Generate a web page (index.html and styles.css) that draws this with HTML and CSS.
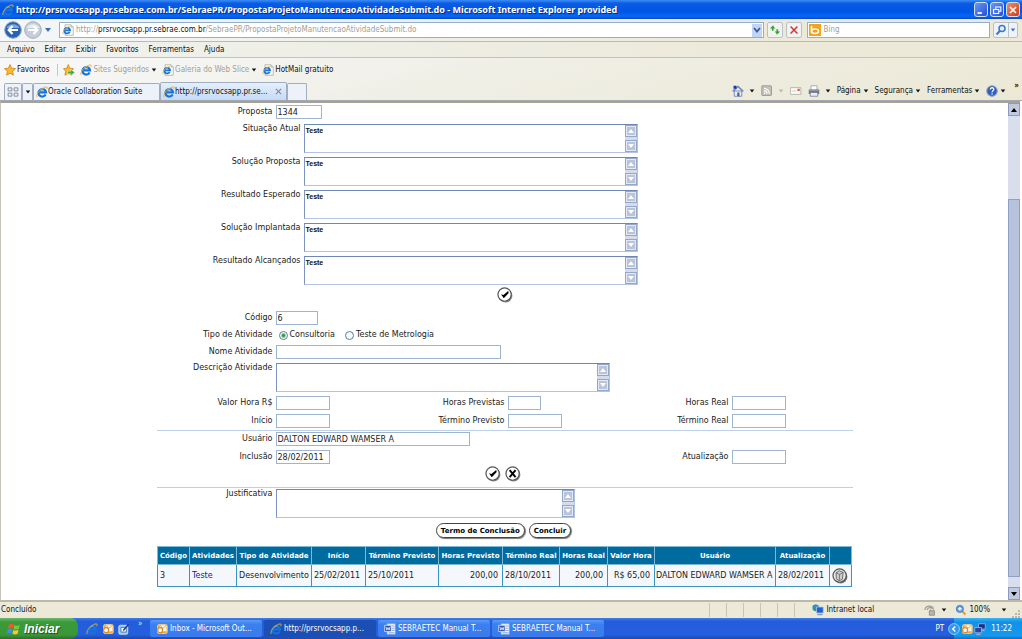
FILE: index.html
```html
<!DOCTYPE html>
<html lang="pt-BR">
<head>
<meta charset="utf-8">
<title>Manutenção de Atividade</title>
<link rel="stylesheet" href="styles.css">
</head>
<body>
<svg class="defs" aria-hidden="true">
  <symbol id="ie" viewBox="0 0 16 16">
    <path d="M12.800 11.300A5 5 0 1 1 13.300 8.600H5" fill="none" stroke="#1672dd" stroke-width="3"/>
    <path d="M5 5.500c1.500-1.500 3.500-1.800 5-.8" fill="none" stroke="#6cb6f7" stroke-width="1"/>
    <path d="M2 14.800C-1.500 12 7 1.800 13.500 1.200c1.800 0 1.600 1.500.8 3" fill="none" stroke="#efb124" stroke-width="1.300"/>
  </symbol>
  <symbol id="iepage" viewBox="0 0 16 16">
    <path d="M4 1h8l3 3v11H4z" fill="#fdfdf6" stroke="#a8a894"/>
    <path d="M12 1v3h3" fill="#dcdccc" stroke="#a8a894"/>
    <path d="M10.300 10.500A3.800 3.800 0 1 1 10.700 8.500H4.500" fill="none" stroke="#1672dd" stroke-width="2.400"/>
    <path d="M2 13.500C-.5 11 5 4 10.500 3.500" fill="none" stroke="#e8ae20" stroke-width="1.200"/>
  </symbol>
  <symbol id="star" viewBox="0 0 16 16"><path d="M8 .8l2.200 4.800 5.200.6-3.900 3.500 1.100 5.200L8 12.300l-4.600 2.600 1.100-5.200L.6 6.200l5.200-.6z" fill="#fbb829" stroke="#cf7d12"/></symbol>
  <symbol id="tick" viewBox="0 0 20 20">
    <circle cx="10.800" cy="11" r="8.500" fill="#8a8a8a"/><circle cx="9.500" cy="9.500" r="8.300" fill="#fff" stroke="#555" stroke-width="1.500"/>
    <path d="M5 9.200l3 .8L14 5l.6 2.600-6.100 6.600z" fill="#000"/>
  </symbol>
  <symbol id="cross" viewBox="0 0 20 20">
    <circle cx="10.800" cy="11" r="8.500" fill="#8a8a8a"/><circle cx="9.500" cy="9.500" r="8.300" fill="#fff" stroke="#555" stroke-width="1.500"/>
    <path d="M5.800 5.200l7.400 8.600M13.200 5.200l-7.400 8.600" stroke="#000" stroke-width="2.400"/>
  </symbol>
  <symbol id="up" viewBox="0 0 8 8"><path d="M4 2l3 4H1z" fill="currentColor"/></symbol>
  <symbol id="down" viewBox="0 0 8 8"><path d="M4 6L1 2h6z" fill="currentColor"/></symbol>
  <symbol id="outlook" viewBox="0 0 16 16">
    <rect x="2" y="2" width="13" height="12" rx="2" fill="#f4a63a" stroke="#f8d79a"/>
    <path d="M5 3h9v8H5z" fill="#fff8e6"/><path d="M5 3l4.500 4L14 3" fill="none" stroke="#c98a2c"/>
    <circle cx="5.500" cy="9.500" r="3.300" fill="#fff" stroke="#d98920" stroke-width="1.600"/>
  </symbol>
  <symbol id="word" viewBox="0 0 16 16">
    <path d="M4 1h11v14H4z" fill="#f5f8ff" stroke="#8ea7d8"/><path d="M10 4h4M10 7h4M10 10h4M6 13h8" stroke="#6f8cc9"/>
    <rect x="1" y="3" width="8.500" height="8.500" fill="#2a51a8" stroke="#dbe5fa"/><path d="M2.500 5l1.300 4.500L5.300 6l1.500 3.500L8 5" fill="none" stroke="#fff"/>
  </symbol>
</svg>

<header class="titlebar">
  <svg class="icon"><use href="#ie"/></svg>
  <h1 class="title">http://prsrvocsapp.pr.sebrae.com.br/SebraePR/PropostaProjetoManutencaoAtividadeSubmit.do - Microsoft Internet Explorer provided</h1>
  <div class="winbtns">
    <button class="winbtn" aria-label="Minimizar"><svg viewBox="0 0 14 14"><path d="M3 10.500h5" stroke="#fff" stroke-width="2"/></svg></button>
    <button class="winbtn" aria-label="Restaurar"><svg viewBox="0 0 14 14"><path d="M5.500 6V3.500h6v5H9M3 6.500h6v4.500H3z" fill="none" stroke="#fff" stroke-width="1.200"/></svg></button>
    <button class="winbtn winclose" aria-label="Fechar"><svg viewBox="0 0 14 14"><path d="M3.500 3.500l7 7M10.500 3.500l-7 7" stroke="#fff" stroke-width="1.800"/></svg></button>
  </div>
</header>

<div class="addressrow">
  <div class="nav">
    <button class="navbtn" aria-label="Voltar"><svg viewBox="0 0 18 18"><circle cx="9" cy="9" r="8.300" fill="#2a62b4" stroke="#8fa3c0"/><path d="M2.500 7a7 6 0 0 1 13 0z" fill="#7fa9de"/><path d="M14 9H5M8.500 5L4.700 9l3.800 4" fill="none" stroke="#fff" stroke-width="2.200"/></svg></button>
    <button class="navbtn" aria-label="Avançar"><svg viewBox="0 0 18 18"><circle cx="9" cy="9" r="8.300" fill="#c5cedd" stroke="#a3abba"/><path d="M2.500 7a7 6 0 0 1 13 0z" fill="#e7ebf2"/><path d="M4 9h9M9.500 5l3.800 4-3.800 4" fill="none" stroke="#fff" stroke-width="2.200"/></svg></button>
    <button class="plain navdrop" aria-label="Páginas recentes"><svg class="tri"><use href="#down"/></svg></button>
  </div>
  <div class="address">
    <svg class="icon"><use href="#iepage"/></svg>
    <div class="url" role="textbox" contenteditable="true" spellcheck="false" aria-label="Endereço">http://<span class="host">prsrvocsapp.pr.sebrae.com.br</span>/SebraePR/PropostaProjetoManutencaoAtividadeSubmit.do</div>
    <button class="addrdrop" aria-label="Mostrar endereços"><svg viewBox="0 0 10 10"><path d="M2 3l3 3.500L8 3" fill="none" stroke="#3d5c8e" stroke-width="1.800"/></svg></button>
  </div>
  <button class="boxbtn" aria-label="Atualizar"><svg viewBox="0 0 14 14"><path d="M5.500 1L1 5.200h2.300V8h2V5.200h2L4.800 2zM8.500 13l4.500-4.200h-2.300V6h-2v2.800h-2L9.200 12z" fill="#35a235"/></svg></button>
  <button class="boxbtn" aria-label="Parar"><svg viewBox="0 0 14 14"><path d="M3 3l8 8M11 3l-8 8" stroke="#cf3838" stroke-width="1.800"/></svg></button>
  <label class="search">
    <svg class="bing" viewBox="0 0 12 12"><rect width="12" height="12" fill="#f8a21c"/><path d="M2.500 2v6.500" stroke="#fff" stroke-width="1.500"/><ellipse cx="6" cy="7.300" rx="3.500" ry="2.200" fill="none" stroke="#fff" stroke-width="1.500"/></svg>
    <input class="searchinput" type="text" placeholder="Bing" aria-label="Pesquisar">
  </label>
  <div class="searchbtns">
    <button class="plain" aria-label="Pesquisar no Bing"><svg class="lens" viewBox="0 0 12 12"><circle cx="7" cy="4.500" r="3" fill="#e4effc" stroke="#3b78c9" stroke-width="1.500"/><path d="M5 6.800L1.500 10.500" stroke="#3b78c9" stroke-width="2"/></svg></button>
    <button class="plain split" aria-label="Opções de pesquisa"><svg class="tri"><use href="#down"/></svg></button>
  </div>
</div>

<nav class="menubar">
  <button class="plain">Arquivo</button><button class="plain">Editar</button><button class="plain">Exibir</button><button class="plain">Favoritos</button><button class="plain">Ferramentas</button><button class="plain">Ajuda</button>
</nav>

<div class="toolbars">
  <div class="favbar">
    <button class="plain fav"><svg class="icon"><use href="#star"/></svg>Favoritos</button>
    <button class="plain addfav" aria-label="Adicionar a favoritos"><svg class="icon" viewBox="0 0 16 16"><path d="M7 .8l2 4.800 5 .6-3.800 3.500 1 5.200L7 12.300l-4.400 2.600 1-5.200L.6 6.200l4.500-.6z" fill="#fbb829" stroke="#cf7d12"/><path d="M6 9.500h4.500V7l5.300 4.300-5.300 4.200V13H6z" fill="#3fae3a" stroke="#fff" stroke-width=".6"/></svg></button>
    <button class="plain dim"><svg class="icon"><use href="#ie"/></svg>Sites Sugeridos<svg class="tri dark"><use href="#down"/></svg></button>
    <button class="plain dim"><svg class="icon"><use href="#iepage"/></svg>Galeria do Web Slice<svg class="tri dark"><use href="#down"/></svg></button>
    <button class="plain"><svg class="icon"><use href="#iepage"/></svg>HotMail gratuito</button>
  </div>
  <div class="tabrow">
    <div class="tabs">
      <button class="tab quick" aria-label="Guias rápidas"><svg class="icon" viewBox="0 0 16 16"><path d="M1.500 2.500h5v4h-5zM9.500 2.500h5v4h-5zM1.500 9.500h5v4h-5zM9.500 9.500h5v4h-5z" fill="#eef2f8" stroke="#7d8494" stroke-width="1.200"/></svg></button>
      <button class="tab quickdrop" aria-label="Lista de guias"><svg class="tri dark"><use href="#down"/></svg></button>
      <button class="tab wide"><svg class="icon"><use href="#ie"/></svg>Oracle Collaboration Suite</button>
      <button class="tab wide active"><svg class="icon"><use href="#ie"/></svg>http://prsrvocsapp.pr.se...<svg class="tabclose" viewBox="0 0 8 8"><path d="M1 1l6 6M7 1L1 7" stroke="#888" stroke-width="1.300"/></svg></button>
      <button class="tab newtab" aria-label="Nova guia"></button>
    </div>
    <div class="commands">
      <button class="plain cmd" aria-label="Página inicial"><svg class="icon" viewBox="0 0 16 16"><path d="M3 8h10v7H3z" fill="#e9eefb" stroke="#5a6fa8"/><path d="M1 8.500L8 2l7 6.500" fill="none" stroke="#6b86c4" stroke-width="2"/><path d="M2 1h4v4H2z" fill="#1b34b8"/><path d="M7 10h3v5H7z" fill="#4b5f92"/></svg><svg class="tri dark"><use href="#down"/></svg></button>
      <button class="plain cmd" aria-label="Feeds"><svg class="icon" viewBox="0 0 16 16"><rect x="1" y="1" width="13" height="13" rx="1" fill="#c3c1b6" stroke="#8f8d84"/><path d="M4 7.500a4 4 0 0 1 4 4M4 4.500a7 7 0 0 1 7 7" fill="none" stroke="#fff" stroke-width="1.500"/><circle cx="4.700" cy="10.800" r="1.100" fill="#fff"/></svg><svg class="tri faint"><use href="#down"/></svg></button>
      <button class="plain cmd" aria-label="Ler email"><svg class="icon" viewBox="0 0 16 16"><path d="M.5 3.500h14v9H.5z" fill="#fbfbf7" stroke="#a5a59b"/><path d="M10 5h3v3h-3z" fill="#d9534f"/><path d="M2 8h6" stroke="#c6c6bf"/></svg></button>
      <button class="plain cmd" aria-label="Imprimir"><svg class="icon" viewBox="0 0 16 16"><path d="M4 1h8v6H4z" fill="#fff" stroke="#8996ac"/><path d="M1 6h14v6H1z" fill="#6d7480"/><path d="M3 10h10v5H3z" fill="#e8edf6" stroke="#70788a"/><path d="M2 7.500h12" stroke="#a7afbd"/></svg><svg class="tri dark"><use href="#down"/></svg></button>
      <button class="plain cmd">Página<svg class="tri dark"><use href="#down"/></svg></button>
      <button class="plain cmd">Segurança<svg class="tri dark"><use href="#down"/></svg></button>
      <button class="plain cmd">Ferramentas<svg class="tri dark"><use href="#down"/></svg></button>
      <button class="plain cmd help" aria-label="Ajuda"><svg class="icon" viewBox="0 0 16 16"><circle cx="8" cy="8" r="7" fill="#2e5fba" stroke="#8a9dc6" stroke-width="1.500"/><path d="M5.700 6c0-3.200 4.900-3 4.700 0-.2 1.700-2.300 1.700-2.300 3.600M8.100 11v1.700" fill="none" stroke="#fff" stroke-width="1.700"/></svg><svg class="tri dark"><use href="#down"/></svg></button>
      <button class="plain more" aria-label="Mais comandos">»</button>
    </div>
  </div>
</div>

<div class="viewport">
  <main class="page">
    <form class="form">
      <div class="row">
        <label class="label" for="proposta">Proposta</label><input class="box w46" id="proposta" value="1344">
      </div>
      <div class="areas">
        <label class="label" for="a1">Situação Atual</label><div class="area"><textarea class="text" id="a1">Teste</textarea><span class="scroller"><svg><use href="#up"/></svg><svg><use href="#down"/></svg></span></div>
        <label class="label" for="a2">Solução Proposta</label><div class="area"><textarea class="text" id="a2">Teste</textarea><span class="scroller"><svg><use href="#up"/></svg><svg><use href="#down"/></svg></span></div>
        <label class="label" for="a3">Resultado Esperado</label><div class="area"><textarea class="text" id="a3">Teste</textarea><span class="scroller"><svg><use href="#up"/></svg><svg><use href="#down"/></svg></span></div>
        <label class="label" for="a4">Solução Implantada</label><div class="area"><textarea class="text" id="a4">Teste</textarea><span class="scroller"><svg><use href="#up"/></svg><svg><use href="#down"/></svg></span></div>
        <label class="label" for="a5">Resultado Alcançados</label><div class="area"><textarea class="text" id="a5">Teste</textarea><span class="scroller"><svg><use href="#up"/></svg><svg><use href="#down"/></svg></span></div>
      </div>
      <div class="actions first">
        <button class="round" type="button" aria-label="Confirmar proposta"><svg><use href="#tick"/></svg></button>
      </div>

      <div class="fields">
        <div class="row"><label class="label" for="codigo">Código</label><input class="box w42" id="codigo" value="6"></div>
        <div class="row" role="radiogroup" aria-label="Tipo de Atividade">
          <span class="label">Tipo de Atividade</span>
          <div class="radios">
            <label class="choice"><input class="radio" type="radio" name="tipo" checked>Consultoria</label>
            <label class="choice"><input class="radio" type="radio" name="tipo">Teste de Metrologia</label>
          </div>
        </div>
        <div class="row"><label class="label" for="nome">Nome Atividade</label><input class="box w225" id="nome"></div>
        <div class="row top"><label class="label" for="descr">Descrição Atividade</label><div class="area w334"><textarea class="text" id="descr"></textarea><span class="scroller"><svg><use href="#up"/></svg><svg><use href="#down"/></svg></span></div></div>
        <div class="row"><label class="label" for="valor">Valor Hora R$</label><input class="box w54" id="valor"><label class="label" for="hprev">Horas Previstas</label><input class="box w33" id="hprev"><label class="label" for="hreal">Horas Real</label><input class="box w54" id="hreal"></div>
        <div class="row"><label class="label" for="inicio">Início</label><input class="box w54" id="inicio"><label class="label" for="tprev">Término Previsto</label><input class="box w54" id="tprev"><label class="label" for="treal">Término Real</label><input class="box w54" id="treal"></div>
      </div>
      <hr class="rule">
      <div class="fields">
        <div class="row"><label class="label" for="usuario">Usuário</label><input class="box w194" id="usuario" value="DALTON EDWARD WAMSER A"></div>
        <div class="row"><label class="label" for="inclusao">Inclusão</label><input class="box w54" id="inclusao" value="28/02/2011"><span></span><span></span><label class="label" for="atual">Atualização</label><input class="box w54" id="atual"></div>
      </div>
      <div class="actions second">
        <button class="round" type="button" aria-label="Confirmar atividade"><svg><use href="#tick"/></svg></button>
        <button class="round" type="button" aria-label="Cancelar"><svg><use href="#cross"/></svg></button>
      </div>
      <hr class="rule">
      <div class="row top"><label class="label" for="just">Justificativa</label><div class="area w299"><textarea class="text" id="just"></textarea><span class="scroller"><svg><use href="#up"/></svg><svg><use href="#down"/></svg></span></div></div>
      <div class="actions third">
        <button class="pill" type="button">Termo de Conclusão</button>
        <button class="pill" type="button">Concluir</button>
      </div>
    </form>
    <table class="grid">
      <colgroup><col class="c32"><col class="c47"><col class="c75"><col class="c54"><col class="c73"><col class="c64"><col class="c57"><col class="c48"><col class="c47"><col class="c121"><col class="c54"><col class="c22"></colgroup>
      <thead><tr><th>Código</th><th>Atividades</th><th>Tipo de Atividade</th><th>Início</th><th>Término Previsto</th><th>Horas Previsto</th><th>Término Real</th><th>Horas Real</th><th>Valor Hora</th><th>Usuário</th><th>Atualização</th><th></th></tr></thead>
      <tbody><tr><td>3</td><td><a class="link" href="#">Teste</a></td><td>Desenvolvimento</td><td>25/02/2011</td><td>25/10/2011</td><td class="num">200,00</td><td>28/10/2011</td><td class="num">200,00</td><td class="num">R$ 65,00</td><td class="user">DALTON EDWARD WAMSER A</td><td>28/02/2011</td><td class="tool"><button class="round" aria-label="Excluir"><svg viewBox="0 0 20 20"><circle cx="10.800" cy="11" r="8.500" fill="#777"/><circle cx="9.500" cy="9.500" r="8.300" fill="#e6e6e6" stroke="#555" stroke-width="1.500"/><path d="M5 6l4-2.500 5 2-1 8.500-4 2-3.500-2.500z" fill="#ccc" stroke="#555"/><path d="M5 6l4.500 2L14 5.500M9.500 8L9 16" fill="none" stroke="#666"/></svg></button></td></tr></tbody>
    </table>
  </main>
  <div class="vscroll" aria-hidden="true">
    <span class="sbtn"><svg><use href="#up"/></svg></span>
    <span class="track"><span class="thumb"></span></span>
    <span class="sbtn"><svg><use href="#down"/></svg></span>
  </div>
</div>

<div class="statusbar">
  <span class="done">Concluído</span>
  <span class="cells"><i></i><i></i><i></i><i></i><i></i><i></i></span>
  <span class="zone"><svg class="icon" viewBox="0 0 16 16"><circle cx="5" cy="5" r="4.500" fill="#36a853"/><path d="M1 3c3-3 6-2 8 0l-2 6C4 9 1 6 1 3z" fill="#3c86dd"/><path d="M6 4h9v8H6z" fill="#1a62d6" stroke="#b9c7de"/><path d="M7 14h7" stroke="#8c9ab2" stroke-width="2"/></svg>Intranet local</span>
  <button class="plain protect" aria-label="Modo protegido"><svg class="icon" viewBox="0 0 16 16"><path d="M1 8c1-6 9-7 12-2M4 8c1-3 4-4 6-3" fill="none" stroke="#9a9a92" stroke-width="1.500"/><path d="M7 9h7v6H7z" fill="#b4b4ac" stroke="#85857e"/><path d="M8.500 9V7c1-2 3-2 4 0v2" fill="none" stroke="#85857e"/></svg><svg class="tri dark"><use href="#down"/></svg></button>
  <button class="plain zoomer"><svg class="icon" viewBox="0 0 16 16"><path d="M9 9l5 5" stroke="#e09a32" stroke-width="2.500"/><circle cx="6.500" cy="6.500" r="4.800" fill="#5c9be8" stroke="#3f78c4"/><path d="M4 6.500h5M6.500 4v5" stroke="#fff" stroke-width="1.500"/></svg><span>100%</span><svg class="tri dark"><use href="#down"/></svg></button>
  <svg class="grip" viewBox="0 0 8 8"><path d="M6 0h2v2H6zM3 3h2v2H3zM6 3h2v2H6zM0 6h2v2H0zM3 6h2v2H3zM6 6h2v2H6z" fill="#bdb9a4"/></svg>
</div>

<footer class="taskbar">
  <button class="start"><svg viewBox="0 0 16 16"><path d="M2 3c2-1.500 4-1 5.500 0l-1 4.500C5 6.500 3 6.300 1 7.500z" fill="#f0592a"/><path d="M8.500 3.500c2 1 4 1 6-.2l-1 4.500c-2 1.200-4 1-6 .2z" fill="#7cc540"/><path d="M.8 8.500c2-1.200 4-1 5.500 0l-1 4.500c-1.500-1-3.500-1.200-5.500 0z" fill="#3d8df5"/><path d="M7.200 9c2 1 4 1 6-.2l-1 4.500c-2 1.200-4 1-6 .2z" fill="#fbc52c"/></svg>Iniciar</button>
  <div class="quicklaunch">
    <button class="plain" aria-label="Internet Explorer"><svg class="icon"><use href="#ie"/></svg></button>
    <button class="plain" aria-label="Outlook"><svg class="icon"><use href="#outlook"/></svg></button>
    <button class="plain" aria-label="Área de trabalho"><svg class="icon" viewBox="0 0 16 16"><rect x="1" y="3" width="12" height="12" rx="2" fill="#8fc4ee" stroke="#e1effb"/><path d="M4 6h7v6H4z" fill="#fff" stroke="#31649e"/><path d="M7 10l7-8" stroke="#1e3f73" stroke-width="2"/></svg></button>
    <button class="plain chevron" aria-label="Mais">»</button>
  </div>
  <div class="tasks">
    <button class="task"><svg class="icon"><use href="#outlook"/></svg>Inbox - Microsoft Out...</button>
    <button class="task current"><svg class="icon"><use href="#ie"/></svg>http://prsrvocsapp.p...</button>
    <button class="task"><svg class="icon"><use href="#word"/></svg>SEBRAETEC Manual T...</button>
    <button class="task"><svg class="icon"><use href="#word"/></svg>SEBRAETEC Manual T...</button>
  </div>
  <span class="lang">PT</span>
  <div class="tray">
    <button class="plain hide" aria-label="Ocultar ícones"><svg viewBox="0 0 14 14"><circle cx="7" cy="7" r="6.300" fill="#2f97ee" stroke="#a4d7fb"/><path d="M8.500 4L5.500 7l3 3" fill="none" stroke="#fff" stroke-width="1.700"/></svg></button>
    <svg class="icon"><use href="#outlook"/></svg>
    <svg class="icon" viewBox="0 0 16 16"><path d="M6 1h9v7H6z" fill="#16308c" stroke="#a9b9dd"/><path d="M1 6h9v7H1z" fill="#24489f" stroke="#a9b9dd"/><path d="M3 15h6M11 10h3" stroke="#a9b9dd" stroke-width="1.500"/></svg>
    <time class="clock">11:22</time>
  </div>
</footer>
</body>
</html>
```

FILE: styles.css
```css
* { box-sizing: border-box; }
body {
  margin: 0;
  height: 100vh;
  display: flex;
  flex-direction: column;
  overflow: hidden;
  font-family: "DejaVu Sans Condensed", "DejaVu Sans", sans-serif;
  font-size: 8px;
  line-height: 12px;
  color: #111;
  background: #fff;
}
button, input, textarea { font: inherit; color: inherit; margin: 0; }
button { white-space: nowrap; }
svg { display: block; flex: none; }
.defs { position: absolute; width: 0; height: 0; }
.icon { width: 12px; height: 12px; }
.tri { width: 6px; height: 6px; color: #3670bd; }
.dark { color: #111; }
.faint { color: #bbb8a8; }
.plain { display: flex; align-items: center; gap: 2px; padding: 0; border: 0; background: none; }

/* Title bar */
.titlebar {
  flex: none;
  display: flex;
  align-items: center;
  gap: 2px;
  height: 19px;
  padding: 0 2px;
  background: linear-gradient(#3c8cf3, #0a5ce6 18%, #0054e3 60%, #0568fb 85%, #1248bb);
}
.title {
  flex: 1;
  min-width: 0;
  margin: 0;
  overflow: hidden;
  white-space: nowrap;
  font: bold 9px/14px "Noto Sans", sans-serif;
  color: #fff;
  text-shadow: 1px 1px 0 #0a2c86;
}
.winbtns { display: flex; gap: 2px; }
.winbtn {
  width: 14px;
  height: 15px;
  padding: 0;
  border: 1px solid #cfdefb;
  border-radius: 3px;
  background: linear-gradient(135deg, #6d96f2, #2152d6);
}
.winclose { background: linear-gradient(135deg, #ee8c6c, #d03b14); }

/* Address row */
.addressrow {
  flex: none;
  display: flex;
  align-items: center;
  gap: 3px;
  height: 23px;
  padding: 0 4px;
  background: linear-gradient(90deg, #f4f6f8, #ece9d8 80%);
  border-bottom: 1px solid #bdbaab;
}
.nav { display: flex; align-items: center; gap: 2px; width: 52px; }
.navbtn { width: 18px; height: 18px; padding: 0; border: 0; background: none; border-radius: 50%; }
.navdrop .tri { width: 8px; height: 8px; }
.address, .search {
  display: flex;
  align-items: center;
  height: 16px;
  border: 1px solid #92aecb;
  background: #fff;
}
.address { flex: 1; gap: 2px; padding: 0 1px 0 2px; min-width: 0; }
.url { flex: 1; min-width: 0; overflow: hidden; white-space: nowrap; color: #a3a090; outline: 0; }
.host { color: #111; }
.addrdrop { width: 10px; height: 13px; padding: 0; border: 0; background: #c3d5f7; }
.boxbtn { width: 16px; height: 16px; padding: 1px; border: 1px solid #b9c0c8; border-radius: 2px; background: #f2f3f1; }
.search { width: 18%; gap: 2px; margin-left: 2px; padding-left: 1px; }
.bing { width: 12px; height: 12px; }
.searchinput { flex: 1; min-width: 0; padding: 0; border: 0; outline: 0; background: none; }
.searchinput::placeholder { color: #a3a090; }
.searchbtns { display: flex; height: 16px; border: 1px solid #b9c0c8; border-radius: 2px; background: #eef3fa; }
.searchbtns .plain { padding: 0 1px; }
.searchbtns .split { border-left: 1px solid #b9c0c8; }
.lens { width: 12px; height: 12px; }

/* Menu and toolbars */
.menubar {
  flex: none;
  display: flex;
  align-items: center;
  gap: 10px;
  height: 16px;
  padding: 0 7px;
  background: linear-gradient(90deg, #f1f2f0, #ece9d8 80%);
  border-bottom: 1px solid #c6c3b6;
}
.toolbars { flex: none; background: linear-gradient(165deg, #f7f8fa, #f0efe6 45%, #ebe8d5); }
.favbar { display: flex; align-items: center; gap: 5px; height: 24px; padding: 0 4px; }
.favbar .plain { gap: 1px; }
.favbar .dim { color: #a3a090; }
.favbar .fav { margin-right: 3px; }
.favbar .addfav { padding-left: 5px; border-left: 1px solid #cbc8ba; }
.favbar .tri { margin-left: 1px; }
.tabrow { display: flex; justify-content: space-between; align-items: flex-end; height: 19px; border-bottom: 1px solid #a2a9b4; }
.tabs { display: flex; padding-left: 4px; }
.tab {
  display: flex;
  align-items: center;
  height: 17px;
  padding: 0 2px;
  border: 1px solid #a2aebf;
  border-bottom: 0;
  border-radius: 2px 2px 0 0;
  background: #edf2fa;
}
.quick { width: 18px; }
.quickdrop { width: 11px; }
.wide { width: 127px; }
.active { background: linear-gradient(#e5effc, #c4dbf8); height: 18px; margin-top: -1px; }
.tabclose { width: 7px; height: 7px; margin-left: auto; margin-right: 2px; }
.newtab { width: 20px; }
.commands { display: flex; align-items: center; gap: 6px; height: 18px; padding-right: 3px; }
.cmd { gap: 2px; }
.cmd:nth-child(-n+4) .tri { margin-left: 3px; }
.more { align-self: flex-start; margin-left: 2px; font-weight: bold; line-height: 8px; }

/* Browser viewport */
.viewport {
  flex: 1;
  min-height: 0;
  display: flex;
  margin-right: 2px;
  border-top: 2px solid #a5a294;
  border-left: 1px solid #c8c5b8;
}
.page { flex: 1; min-width: 0; overflow: hidden; font-family: "DejaVu Sans", sans-serif; color: #222; }
.form, .grid { width: 100%; margin: 0 auto; }
.form { max-width: 696px; padding-top: 2px; }
.row { display: grid; grid-template-columns: 116px 54px 172px 54px 164px 1fr; column-gap: 3px; align-items: center; }
.row .w225, .row .w334, .row .w194, .row .w299, .radios { grid-column: 2 / -1; }
.top { align-items: start; }
.label { text-align: right; line-height: 10px; white-space: nowrap; }
.box { height: 14px; padding: 0 1px; border: 1px solid #9db5d0; border-radius: 0; background: #fff; color: #222; }
.w33 { width: 33px; }
.w42 { width: 42px; }
.w46 { width: 46px; }
.w54 { width: 54px; }
.w194 { width: 194px; }
.w225 { width: 225px; }
.w299 { width: 299px; }
.w334 { width: 334px; }
.areas { display: grid; grid-template-columns: 144px 334px; gap: 4px 3px; margin-top: 5px; }
.area { display: flex; height: 29px; border: 1px solid #b3c3e4; border-top-color: #6f87b5; border-left-color: #7d94c0; background: #fff; }
.text { flex: 1; min-width: 0; padding: 1px; border: 0; outline: 0; resize: none; overflow: hidden; background: none; font: bold 7px/9px "Liberation Sans", sans-serif; color: #111; }
.scroller { display: flex; flex-direction: column; justify-content: space-between; width: 12px; background: #d5dbea; }
.scroller svg { width: 12px; height: 12px; padding: 1px; border: 1px solid #93a6cc; background: #b9c3da; color: #fff; outline: 1px solid #e4e9f4; outline-offset: -2px; }
.actions { display: flex; justify-content: center; }
.first { padding: 2px 0 8px; }
.second { gap: 4px; padding: 2px 4px 3px 0; }
.third { gap: 4px; padding: 5px 2px 8px 0; }
.round { display: block; width: 16px; height: 16px; padding: 0; border: 0; border-radius: 50%; background: none; }
.round svg { width: 16px; height: 16px; }
.fields { display: flex; flex-direction: column; gap: 4px; }
.radios { display: flex; gap: 10px; height: 12px; }
.choice { display: flex; align-items: center; gap: 2px; }
.radio { appearance: none; width: 9px; height: 9px; margin-left: 3px; border: 1px solid #5d7ea2; border-radius: 50%; background: #f8f8f5; }
.choice + .choice .radio { margin-left: 0; }
.radio:checked { background: radial-gradient(circle, #2aa62a 0 1px, #fff 3px); }
.rule { height: 1px; margin: 2px 0 1px; border: 0; background: #bdd0ea; }
.pill {
  height: 15px;
  padding: 0 4px;
  border: 1px solid #444;
  border-radius: 8px;
  background: #fff;
  box-shadow: 1px 1px 1px #777;
  font-size: 7px;
  font-weight: bold;
  color: #000;
}

/* Activities table */
.grid { max-width: 694px; table-layout: fixed; border-collapse: collapse; border: 1px solid #3d93bf; }
.grid th { height: 18px; padding: 0; background: #006b9f; border: 1px solid #7fb9d6; color: #fff; font-size: 7px; font-weight: bold; white-space: nowrap; }
.grid td { height: 22px; padding: 0 2px; background: #f4f8fc; border: 1px solid #3d93bf; white-space: nowrap; }
.grid .num { text-align: right; padding-right: 4px; }
.grid .user { padding: 0 1px; }
.grid .tool { padding: 0 2px; }
.link { color: #1b1b8f; text-decoration: none; }
.c22 { width: 22px; }
.c32 { width: 32px; }
.c47 { width: 47px; }
.c48 { width: 48px; }
.c54 { width: 54px; }
.c57 { width: 57px; }
.c64 { width: 64px; }
.c73 { width: 73px; }
.c75 { width: 75px; }
.c121 { width: 121px; }

.vscroll { flex: none; display: flex; flex-direction: column; width: 12px; background: #d9deec; }
.sbtn { display: flex; align-items: center; justify-content: center; height: 13px; border: 1px solid #8d9bbb; background: #c0c9df; color: #000; }
.sbtn svg { width: 8px; height: 8px; }
.track { flex: 1; display: flex; flex-direction: column; justify-content: flex-end; padding-bottom: 10px; }
.thumb { height: 82%; border: 1px solid #8fa0c6; background: #b7c2dc; }

/* Status bar */
.statusbar { flex: none; display: flex; align-items: center; height: 18px; border-top: 2px solid #bcb9a9; background: #ece9d8; padding: 0 2px 0 1px; }
.done { flex: 1; }
.cells { display: flex; height: 14px; }
.cells i { width: 17px; border-left: 1px solid #c9c5b2; }
.zone { display: flex; align-items: center; gap: 2px; width: 113px; padding-left: 1px; }
.protect { width: 31px; gap: 5px; }
.zoomer { margin-right: 5px; }
.zoomer .tri { margin-left: 9px; }
.grip { width: 8px; height: 8px; align-self: flex-end; }

/* Taskbar */
.taskbar { flex: none; display: flex; align-items: stretch; height: 21px; background: linear-gradient(#3d80ea, #245cdb 15%, #2460dd 80%, #1c47ae); color: #fff; }
.start {
  display: flex;
  align-items: center;
  gap: 3px;
  width: 78px;
  padding: 0 7px;
  border: 0;
  border-radius: 0 8px 8px 0;
  background: linear-gradient(#6fb76c, #399a39 20%, #3b973a 80%, #2b7029);
  font: italic bold 12px/16px "Liberation Sans", sans-serif;
  color: #fff;
  text-shadow: 1px 1px 1px #1d4d1c;
}
.start svg { width: 14px; height: 14px; }
.quicklaunch { display: flex; align-items: center; gap: 4px; width: 72px; padding-left: 8px; }
.chevron { align-self: flex-start; margin-left: 4px; color: #d4e3ff; }
.tasks { flex: 1; min-width: 0; display: flex; align-items: center; gap: 2px; }
.task { display: flex; align-items: center; gap: 2px; width: 112px; height: 17px; padding: 0 6px; border: 0; border-radius: 2px; background: linear-gradient(#5c9bf8, #3b7ff0 25%, #3a7bee); color: #fff; }
.current { background: #1c4fb4; }
.lang { align-self: center; margin-right: 10px; }
.tray { display: flex; align-items: center; gap: 1px; padding-right: 10px; background: linear-gradient(#3cb4f5, #1290e8 20%, #129aee 85%, #0f6fc4); }
.hide svg { width: 12px; height: 12px; }
.hide { margin-left: -6px; }
.clock { margin-left: 4px; }
```
